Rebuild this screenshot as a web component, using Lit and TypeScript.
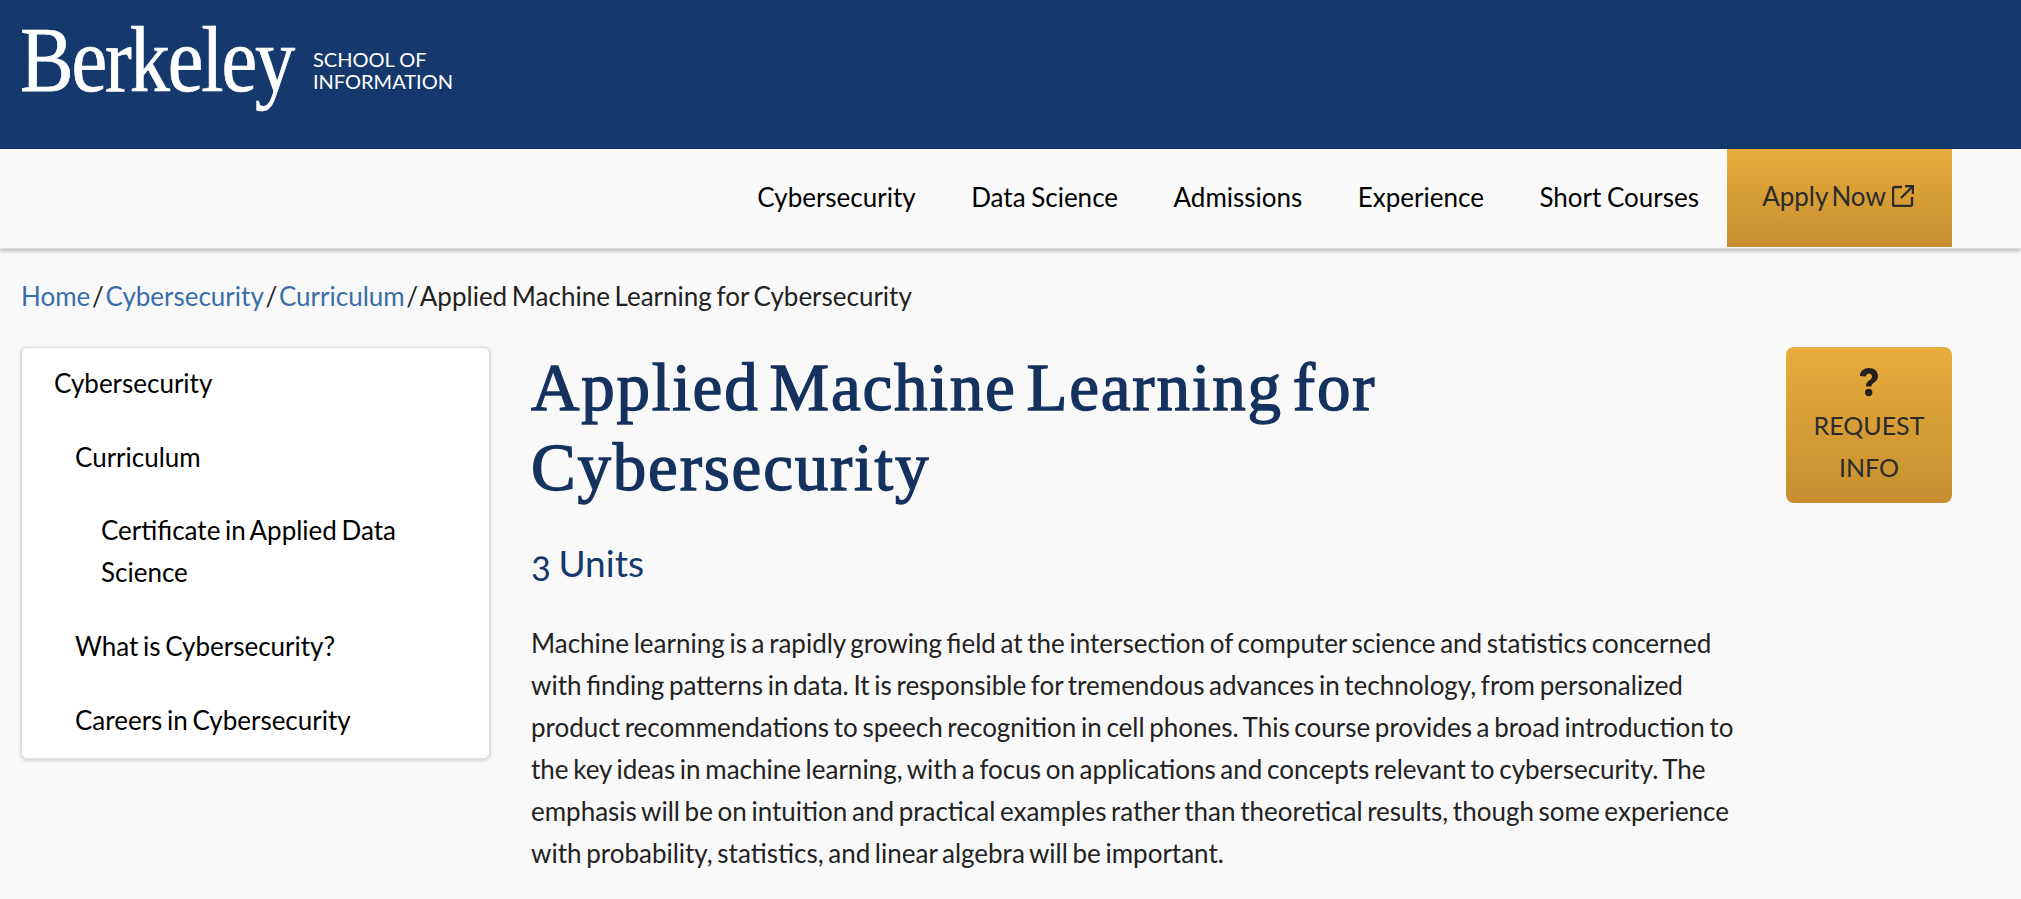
import { html, LitElement, css } from 'lit';
import { customElement } from 'lit/decorators.js';

const sans = css`'Lato', 'Open Sans', sans-serif`;

@customElement('app-root')
export default class AppRoot extends LitElement {
  static styles = css`
    :host {
      display: block;
      height: 899px;
      overflow: hidden;
      background: #f9f9f9;
      font-family: ${sans};
      color: #222;
      font-size: 26px;
      word-spacing: -2px;
    }
    a { text-decoration: none; color: inherit; }

    .brand-bar {
      height: 149px;
      background: #15396c;
      color: #fff;
      padding: 0 20px;
      display: flex;
      align-items: flex-start;
      box-sizing: border-box;
    }
    .wordmark {
      width: 273px;
      font-family: 'Liberation Serif', serif;
      font-size: 94px;
      line-height: 92px;
      letter-spacing: -2.5px;
      margin-top: 13px;
      -webkit-text-stroke: 0.7px #fff;
      transform: scaleX(0.855);
      transform-origin: left;
    }
    .school {
      font-size: 20px;
      line-height: 22px;
      margin: 48px 0 0 20px;
      word-spacing: 0;
    }

    .nav {
      height: 100px;
      box-sizing: border-box;
      border-bottom: 1px solid #ddd;
      box-shadow: 0 2px 4px rgba(0, 0, 0, 0.25);
      background: #fafafa;
      display: flex;
      justify-content: flex-end;
      padding-right: 69px;
      color: #000;
      word-spacing: -1px;
    }
    .nav a {
      display: flex;
      align-items: center;
      margin-left: 55.5px;
      padding-bottom: 4px;
    }
    .nav a.apply {
      margin-left: 28px;
      height: 98px;
      width: 225px;
      box-sizing: border-box;
      justify-content: center;
      gap: 6px;
      padding-right: 3px;
      color: #2b2b2b;
      word-spacing: -3px;
      background: linear-gradient(#e7ac3c, #c68e30);
    }

    .crumbs {
      padding: 29px 21px 0;
      line-height: 36px;
      display: flex;
      gap: 1.7px;
    }
    .crumbs a { color: #3b6ea8; }

    .columns {
      display: grid;
      grid-template-columns: 469px 1fr 166px;
      column-gap: 41px;
      padding: 33px 69px 0 21px;
      align-items: start;
    }

    .side {
      background: #fff;
      border-radius: 6px;
      border: 1px solid #ddd;
      box-shadow: 0 1px 4px rgba(0, 0, 0, 0.2);
      padding: 14px 32px 17px;
      line-height: 42px;
      color: #000;
    }
    .side div { margin-bottom: 31.7px; }
    .side div:last-child { margin-bottom: 0; }
    .side .l2 { padding-left: 21px; }
    .side .l3 { padding-left: 47px; }

    h1 {
      margin: 0;
      font-family: 'Liberation Serif', serif;
      font-size: 67px;
      line-height: 80px;
      font-weight: 400;
      letter-spacing: 1.8px;
      word-spacing: -8.5px;
      -webkit-text-stroke: 1.4px #15325f;
      color: #15325f;
      max-width: 1000px;
    }
    h2 {
      margin: 32px 0 0;
      font-size: 37px;
      line-height: 48px;
      font-weight: 400;
      font-feature-settings: 'onum';
      color: #15396c;
    }
    p {
      margin: 35px 0 0;
      line-height: 42px;
      color: #222;
    }

    .request {
      height: 156px;
      border-radius: 8px;
      background: linear-gradient(#e7ac3c, #c68e30);
      display: flex;
      flex-direction: column;
      align-items: center;
      text-align: center;
      font-size: 25px;
      line-height: 42px;
      word-spacing: 0;
      color: #2b2b2b;
      padding-top: 20px;
      box-sizing: border-box;
    }
    .request svg { display: block; height: 30px; margin-bottom: 7px; }
  `;

  render() {
    return html`
      <div class="brand-bar">
        <div class="wordmark">Berkeley</div>
        <div class="school">SCHOOL OF<br />INFORMATION</div>
      </div>
      <nav class="nav">
        <a href="#">Cybersecurity</a>
        <a href="#">Data Science</a>
        <a href="#">Admissions</a>
        <a href="#">Experience</a>
        <a href="#">Short Courses</a>
        <a class="apply" href="#">Apply Now
          <svg width="22" height="22" viewBox="0 0 22 22" fill="none" stroke="#2b2b2b" stroke-width="2.4">
            <path d="M10 2H3a2 2 0 0 0-2 2v15a2 2 0 0 0 2 2h15a2 2 0 0 0 2-2v-7" />
            <path d="M13 1h8v8M21 1 9 13" />
          </svg>
        </a>
      </nav>
      <div class="crumbs">
        <a href="#">Home</a><span>/</span><a href="#">Cybersecurity</a><span>/</span><a href="#">Curriculum</a><span>/</span><span>Applied Machine Learning for Cybersecurity</span>
      </div>
      <div class="columns">
        <div class="side">
          <div>Cybersecurity</div>
          <div class="l2">Curriculum</div>
          <div class="l3">Certificate in Applied Data Science</div>
          <div class="l2">What is Cybersecurity?</div>
          <div class="l2">Careers in Cybersecurity</div>
        </div>
        <main>
          <h1>Applied Machine Learning for Cybersecurity</h1>
          <h2>3 Units</h2>
          <p>Machine learning is a rapidly growing field at the intersection of computer science and statistics concerned with finding patterns in data. It is responsible for tremendous advances in technology, from personalized product recommendations to speech recognition in cell phones. This course provides a broad introduction to the key ideas in machine learning, with a focus on applications and concepts relevant to cybersecurity. The emphasis will be on intuition and practical examples rather than theoretical results, though some experience with probability, statistics, and linear algebra will be important.</p>
        </main>
        <a class="request" href="#">
          <svg width="20" height="30" viewBox="0 0 20 30" fill="#222">
            <path d="M1 9C1 4 5 1 10 1s9 3 9 8c0 4-2.500 5.500-4.500 7-1.500 1-2 1.700-2 3.500H7c0-3 .8-4.500 3-6 1.700-1.200 3-2 3-4.300 0-1.700-1.300-2.800-3-2.800S7 7.500 7 9.500Z" />
            <circle cx="9.700" cy="25.500" r="3.700" />
          </svg>
          <span>REQUEST INFO</span>
        </a>
      </div>
    `;
  }
}
